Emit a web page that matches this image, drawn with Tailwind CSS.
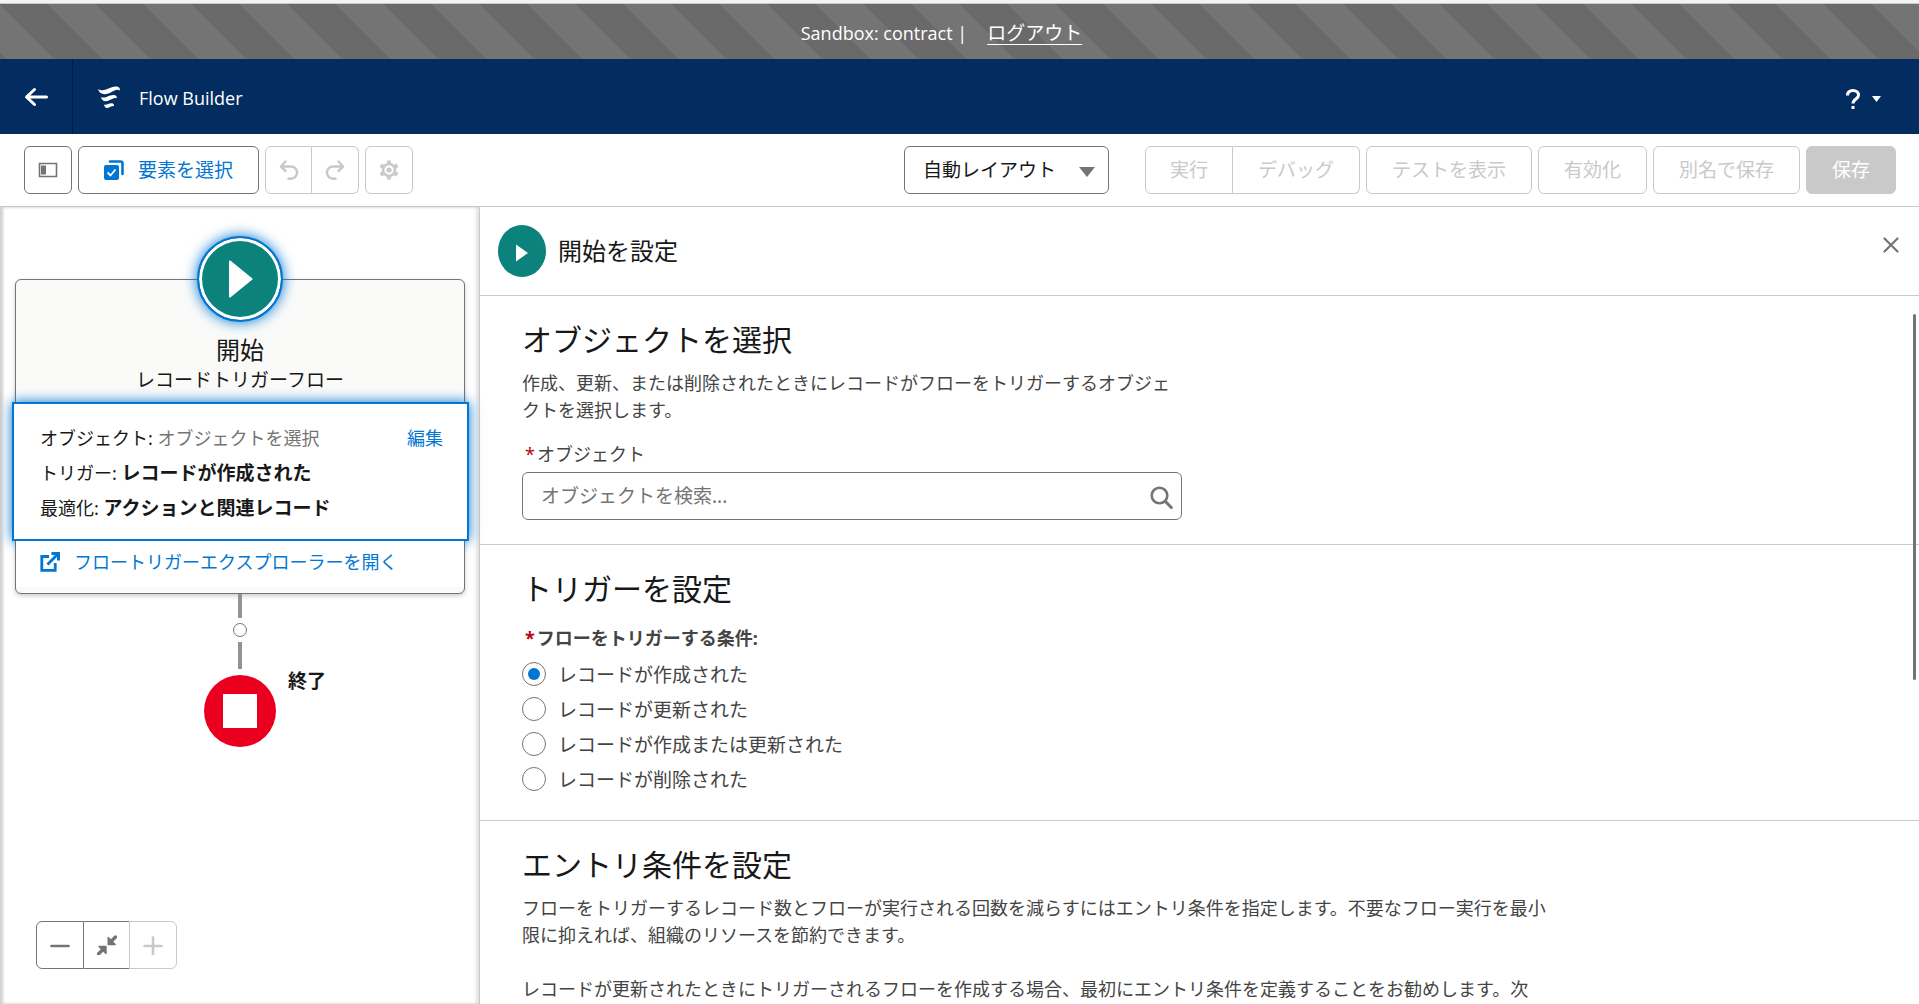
<!DOCTYPE html>
<html lang="ja">
<head>
    <meta charset="UTF-8">
    <meta name="viewport" content="width=device-width, initial-scale=1.0">
    <title>Flow Builder</title>
    <script src="https://cdn.jsdelivr.net/npm/@tailwindcss/browser@4"></script>
</head>
<body class="flex h-screen flex-col overflow-hidden bg-white font-['Noto_Sans','Noto_Sans_CJK_JP',sans-serif] text-[19px] text-[#181818]">
    <!-- Sandbox banner -->
    <div class="h-1 shrink-0 border-b border-[#c9c9c9] bg-[#f3f3f3]"></div>
    <div class="flex h-[55px] shrink-0 items-center justify-center gap-5 bg-[linear-gradient(45deg,#6a6a6a_25%,#747474_25%,#747474_50%,#6a6a6a_50%,#6a6a6a_75%,#747474_75%)] bg-size-[96px_96px] pt-1 pr-9 text-white">
        <span class="font-['Open_Sans','Noto_Sans_CJK_JP',sans-serif] text-[18px]">Sandbox: contract |</span>
        <a href="#" class="underline underline-offset-4">ログアウト</a>
    </div>

    <!-- Header -->
    <header class="flex h-[75px] shrink-0 items-center bg-[#032d60] text-white">
        <a href="#" aria-label="戻る" class="flex h-full w-[73px] items-center justify-center border-r border-[#021b3a]">
            <svg class="h-6 w-6" viewBox="0 0 24 24" fill="none" stroke="currentColor" stroke-width="3" stroke-linecap="round" stroke-linejoin="round"><path d="M22.500 12H3M10.500 4.500L2.500 12l8 7.500"/></svg>
        </a>
        <svg class="ml-6 h-6 w-6" viewBox="-1 -1 24 24" fill="currentColor">
            <path d="M0 3c2 1.500 5 1.800 8 .5C12 1.500 16 0 19 .5c2 .3 3 2 3 4-1.500-1-3.500-.8-6 .3-3 1.400-5.500 3.200-9 3.400C3.500 8.400.8 6 0 3z"/>
            <path d="M3 11c1.500.8 3.500.8 6-.3 3-1.300 5.500-2.200 8-1.500 1.500.5 2 1.800 1.800 3-1.300-.5-2.800-.2-4.800.7-2.200 1.100-4 2.300-6.500 2.300-2.500 0-4-1.800-4.500-4.200z"/>
            <path d="M6 18.500c1.200.5 2.500.3 4-.4 1.800-.8 3.300-1.200 4.800-.6 1 .5 1.400 1.500 1.200 2.500-1-.3-2 0-3.200.6-1.300.8-2.300 1.500-3.800 1.400-1.600-.2-2.700-1.600-3-3.500z"/>
        </svg>
        <h1 class="ml-[18px] pt-1 font-['Open_Sans',sans-serif] text-[18px]">Flow Builder</h1>
        <button type="button" aria-label="ヘルプ" class="mt-1 mr-[38px] ml-auto flex items-center gap-3">
            <svg class="h-5 w-[14px]" viewBox="0 0 14 20" fill="none" stroke="currentColor" stroke-width="3"><path d="M1.500 6.500C1.500 3 4 1.500 7 1.500s5.500 1.800 5.500 4.800c0 3.700-5.500 3.700-5.500 8.200"/><path d="M5.500 18.500h3"/></svg>
            <svg class="h-[6px] w-[9px]" viewBox="0 0 9 6" fill="currentColor"><path d="M0 0h9L4.500 6z"/></svg>
        </button>
    </header>

    <!-- Toolbar -->
    <div class="flex h-[73px] shrink-0 items-center gap-[6px] border-b border-[#c9c9c9] pr-[23px] pl-6">
        <button type="button" aria-label="ツールボックスを切り替え" class="flex h-12 w-12 items-center justify-center rounded-md border border-[#747474] text-[#747474]">
            <svg class="h-4 w-5" viewBox="0 0 20 16"><path d="M1.500 1.500h17v13h-17z" fill="none" stroke="currentColor" stroke-width="1.600"/><path d="M3 3.500h5v9H3z" fill="currentColor"/></svg>
        </button>
        <button type="button" class="flex h-12 items-center gap-[14px] rounded-md border border-[#747474] px-[25px] text-[#0176d3]">
            <svg class="h-5 w-5" viewBox="0 0 20 20">
                <path d="M6 1.500h10.500a2 2 0 0 1 2 2V14" fill="none" stroke="currentColor" stroke-width="2.600" stroke-linecap="round"/>
                <rect x="0" y="5" width="15" height="15" rx="2" fill="currentColor"/>
                <path d="M3.500 12.500l3 3 5-6" fill="none" stroke="white" stroke-width="1.800"/>
            </svg>
            要素を選択
        </button>
        <div class="flex text-[#c9c9c9]">
            <button type="button" disabled aria-label="元に戻す" class="flex h-12 w-[47px] items-center justify-center rounded-l-md border border-[#c9c9c9]">
                <svg class="h-5 w-5" viewBox="0 0 20 20" fill="none" stroke="currentColor" stroke-width="2.500" stroke-linecap="round" stroke-linejoin="round"><path d="M6.500 1.500L2 6.500l4.500 4.500M2.500 6.500h9.500a6 6 0 0 1 0 12.200H9.500"/></svg>
            </button>
            <button type="button" disabled aria-label="やり直す" class="flex h-12 w-[47px] items-center justify-center rounded-r-md border border-l-0 border-[#c9c9c9]">
                <svg class="h-5 w-5" viewBox="0 0 20 20" fill="none" stroke="currentColor" stroke-width="2.500" stroke-linecap="round" stroke-linejoin="round"><path d="M13.500 1.500L18 6.500 13.500 11M17.500 6.500H8a6 6 0 0 0 0 12.200h2.500"/></svg>
            </button>
        </div>
        <button type="button" disabled aria-label="設定" class="flex h-12 w-12 items-center justify-center rounded-md border border-[#c9c9c9] text-[#c9c9c9]">
            <svg class="h-5 w-5" viewBox="0 0 20 20" fill="none" stroke="currentColor"><circle cx="10" cy="10" r="6" stroke-width="2.600"/><circle cx="10" cy="10" r="2.600" fill="currentColor" stroke="none"/><path d="M10 0.500v3.500M10 16v3.500M1.600 5.200l3 1.800M15.400 13l3 1.800M1.600 14.800l3-1.800M15.400 7l3-1.800" stroke-width="4"/></svg>
        </button>

        <div class="relative mr-[30px] ml-auto">
            <select aria-label="レイアウト" class="h-12 w-[205px] appearance-none rounded-md border border-[#747474] bg-white pl-[18px]">
                <option>自動レイアウト</option>
            </select>
            <svg class="pointer-events-none absolute top-[21px] right-[14px] h-[10px] w-4 text-[#747474]" viewBox="0 0 16 10" fill="currentColor"><path d="M0 0h16L8 10z"/></svg>
        </div>
        <div class="flex text-[#c9c9c9]">
            <button type="button" disabled class="h-12 rounded-l-md border border-[#c9c9c9] px-6">実行</button>
            <button type="button" disabled class="h-12 rounded-r-md border border-l-0 border-[#c9c9c9] px-[25px]">デバッグ</button>
        </div>
        <button type="button" disabled class="h-12 rounded-md border border-[#c9c9c9] px-[25px] text-[#c9c9c9]">テストを表示</button>
        <button type="button" disabled class="h-12 rounded-md border border-[#c9c9c9] px-[25px] text-[#c9c9c9]">有効化</button>
        <button type="button" disabled class="h-12 rounded-md border border-[#c9c9c9] px-[25px] text-[#c9c9c9]">別名で保存</button>
        <button type="button" disabled class="h-12 rounded-md border border-[#c9c9c9] bg-[#c9c9c9] px-[25px] text-white">保存</button>
    </div>

    <main class="flex min-h-0 flex-1">
        <!-- Canvas -->
        <section class="flex w-[480px] shrink-0 flex-col border-r border-[#c9c9c9] pt-[72px] pr-[14px] pl-[15px] shadow-[inset_3px_0_3px_#d0d0d0,inset_-3px_0_3px_#e4e4e4]">
            <div class="relative flex flex-col rounded-md border border-[#747474] bg-[#fafaf9] pt-[54px] pb-[6px] shadow-[0_2px_4px_rgba(0,0,0,0.2)]">
                <div class="absolute -top-[44px] left-1/2 flex h-[86px] w-[86px] -translate-x-1/2 items-center justify-center rounded-full border-2 border-[#0176d3] bg-[#0b827c] shadow-[inset_0_0_0_3px_white,0_0_14px_#0176d3]">
                    <svg class="ml-[2px] h-[38px] w-6" viewBox="0 0 24 38" fill="white" stroke="white" stroke-width="2" stroke-linejoin="round"><path d="M1 1.500L22.500 19 1 36.500z"/></svg>
                </div>
                <h2 class="text-center text-[24px] leading-8">開始</h2>
                <p class="text-center leading-7">レコードトリガーフロー</p>
                <div class="-mr-[5px] -ml-1 mt-2 border-2 border-[#0176d3] bg-white px-[26px] pt-[17px] pb-[13px] text-[18px] leading-[35px] shadow-[0_0_12px_#0176d3]">
                    <div class="flex justify-between">
                        <p>オブジェクト: <span class="text-[#747474]">オブジェクトを選択</span></p>
                        <a href="#" class="-mr-[2px] text-[#0176d3]">編集</a>
                    </div>
                    <p>トリガー: <strong class="text-[19px]">レコードが作成された</strong></p>
                    <p>最適化: <strong class="text-[19px]">アクションと関連レコード</strong></p>
                </div>
                <a href="#" class="flex h-[46px] items-center gap-[14px] bg-white pb-1 pl-6 text-[18px] text-[#0176d3]">
                    <svg class="h-5 w-5" viewBox="0 0 20 20" fill="none" stroke="currentColor" stroke-width="2.800"><path d="M9 4.500H1.800v13.800h13.400V11"/><path d="M7.500 12.500L17 3"/><path d="M11.500 1.500h7v7" stroke-width="3"/></svg>
                    フロートリガーエクスプローラーを開く
                </a>
            </div>
            <div class="relative flex flex-col items-center">
                <div class="h-6 w-1 bg-[#939393]"></div>
                <button type="button" aria-label="要素を追加" class="my-[5px] h-[14px] w-[14px] rounded-full border border-[#747474] bg-white"></button>
                <div class="h-[27px] w-1 bg-[#939393]"></div>
                <div class="mt-[6px] flex h-[72px] w-[72px] items-center justify-center rounded-full bg-[#ea001e]">
                    <div class="h-[34px] w-[34px] bg-white"></div>
                </div>
                <span class="absolute top-[73px] left-[273px] font-bold">終了</span>
            </div>

            <!-- Zoom controls -->
            <div class="mt-auto mb-[35px] ml-[21px] flex text-[#747474]">
                <button type="button" aria-label="縮小" class="flex h-12 w-12 items-center justify-center rounded-l-md border border-[#747474] bg-white">
                    <svg class="h-5 w-5" viewBox="0 0 20 20" stroke="currentColor" stroke-width="2.600" stroke-linecap="round"><path d="M1.500 11h17"/></svg>
                </button>
                <button type="button" aria-label="全体を表示" class="flex h-12 w-[45px] items-center justify-center border-y border-[#747474] bg-white">
                    <svg class="h-5 w-5" viewBox="0 0 20 20" fill="currentColor" stroke="currentColor"><path d="M18.500 2L14 6.500M1.500 19L6 14.500" stroke-width="3.400" stroke-linecap="round"/><path d="M11.200 2.500v7h7zM9 18.500v-7H2z" stroke-width="1.400" stroke-linejoin="round"/></svg>
                </button>
                <button type="button" disabled aria-label="拡大" class="flex h-12 w-12 items-center justify-center rounded-r-md border border-[#c9c9c9] bg-white text-[#c9c9c9]">
                    <svg class="h-5 w-5" viewBox="0 0 20 20" stroke="currentColor" stroke-width="2.600" stroke-linecap="round"><path d="M1.500 11h17M10 2.500v17"/></svg>
                </button>
            </div>
        </section>

        <!-- Start settings -->
        <section class="flex min-w-0 flex-1 flex-col">
            <div class="flex h-[89px] shrink-0 items-center border-b border-[#c9c9c9] pr-5 pl-[18px]">
                <div class="flex h-[52px] w-12 items-center justify-center rounded-[50%] bg-[#0b827c]">
                    <svg class="mt-1 h-[18px] w-3" viewBox="0 0 12 18" fill="white"><path d="M0 0.500L12 9 0 17.500z"/></svg>
                </div>
                <h2 class="ml-3 text-[24px]">開始を設定</h2>
                <button type="button" aria-label="閉じる" class="mb-3 ml-auto text-[#747474]">
                    <svg class="h-4 w-4" viewBox="0 0 16 16" stroke="currentColor" stroke-width="2.200" stroke-linecap="round"><path d="M1.500 1.500l13 13M14.500 1.500l-13 13"/></svg>
                </button>
            </div>

            <div class="relative min-h-0 flex-1 overflow-hidden text-[18px] leading-[27px] text-[#444444]">
                <div class="border-b border-[#c9c9c9] px-[42px] py-6">
                    <h3 class="text-[30px] leading-10 text-[#181818]">オブジェクトを選択</h3>
                    <p class="mt-[10px] max-w-[660px]">作成、更新、または削除されたときにレコードがフローをトリガーするオブジェクトを選択します。</p>
                    <label for="object" class="mt-[17px] mb-1 block pl-[3px]"><span class="mr-[2px] text-[#ba0517]">*</span>オブジェクト</label>
                    <div class="relative max-w-[660px]">
                        <input id="object" type="text" placeholder="オブジェクトを検索..." class="block h-12 w-full rounded-md border border-[#747474] pr-12 pl-[18px] text-[19px] placeholder:text-[#747474]">
                        <svg class="pointer-events-none absolute top-[14px] right-[9px] h-[23px] w-[23px] text-[#747474]" viewBox="0 0 23 23" fill="none" stroke="currentColor" stroke-linecap="round"><circle cx="9.500" cy="9.500" r="7.800" stroke-width="2.600"/><path d="M15.500 15.500l5.800 6" stroke-width="3"/></svg>
                    </div>
                </div>

                <div class="border-b border-[#c9c9c9] px-[42px] py-6">
                    <h3 class="text-[30px] leading-10 text-[#181818]">トリガーを設定</h3>
                    <fieldset class="mt-4">
                        <legend class="mb-1 pl-[3px] font-bold"><span class="mr-[2px] text-[#ba0517]">*</span>フローをトリガーする条件:</legend>
                        <label class="flex h-[35px] items-center gap-3 text-[19px]">
                            <input type="radio" name="trigger" checked class="h-6 w-6 appearance-none rounded-full border border-[#747474] p-[5px] before:block before:h-3 before:w-3 before:rounded-full checked:before:bg-[#0176d3]">
                            <span class="pt-1">レコードが作成された</span>
                        </label>
                        <label class="flex h-[35px] items-center gap-3 text-[19px]">
                            <input type="radio" name="trigger" class="h-6 w-6 appearance-none rounded-full border border-[#747474] p-[5px] before:block before:h-3 before:w-3 before:rounded-full checked:before:bg-[#0176d3]">
                            <span class="pt-1">レコードが更新された</span>
                        </label>
                        <label class="flex h-[35px] items-center gap-3 text-[19px]">
                            <input type="radio" name="trigger" class="h-6 w-6 appearance-none rounded-full border border-[#747474] p-[5px] before:block before:h-3 before:w-3 before:rounded-full checked:before:bg-[#0176d3]">
                            <span class="pt-1">レコードが作成または更新された</span>
                        </label>
                        <label class="flex h-[35px] items-center gap-3 text-[19px]">
                            <input type="radio" name="trigger" class="h-6 w-6 appearance-none rounded-full border border-[#747474] p-[5px] before:block before:h-3 before:w-3 before:rounded-full checked:before:bg-[#0176d3]">
                            <span class="pt-1">レコードが削除された</span>
                        </label>
                    </fieldset>
                </div>

                <div class="px-[42px] py-6">
                    <h3 class="text-[30px] leading-10 text-[#181818]">エントリ条件を設定</h3>
                    <p class="mt-[10px] max-w-[1036px]">フローをトリガーするレコード数とフローが実行される回数を減らすにはエントリ条件を指定します。不要なフロー実行を最小限に抑えれば、組織のリソースを節約できます。</p>
                    <p class="mt-[27px] max-w-[1036px]">レコードが更新されたときにトリガーされるフローを作成する場合、最初にエントリ条件を定義することをお勧めします。次</p>
                </div>

                <!-- Scrollbar thumb -->
                <div class="absolute top-[18px] right-[3px] h-[366px] w-[3px] rounded-full bg-[#747474]"></div>
            </div>
        </section>
    </main>
</body>
</html>
